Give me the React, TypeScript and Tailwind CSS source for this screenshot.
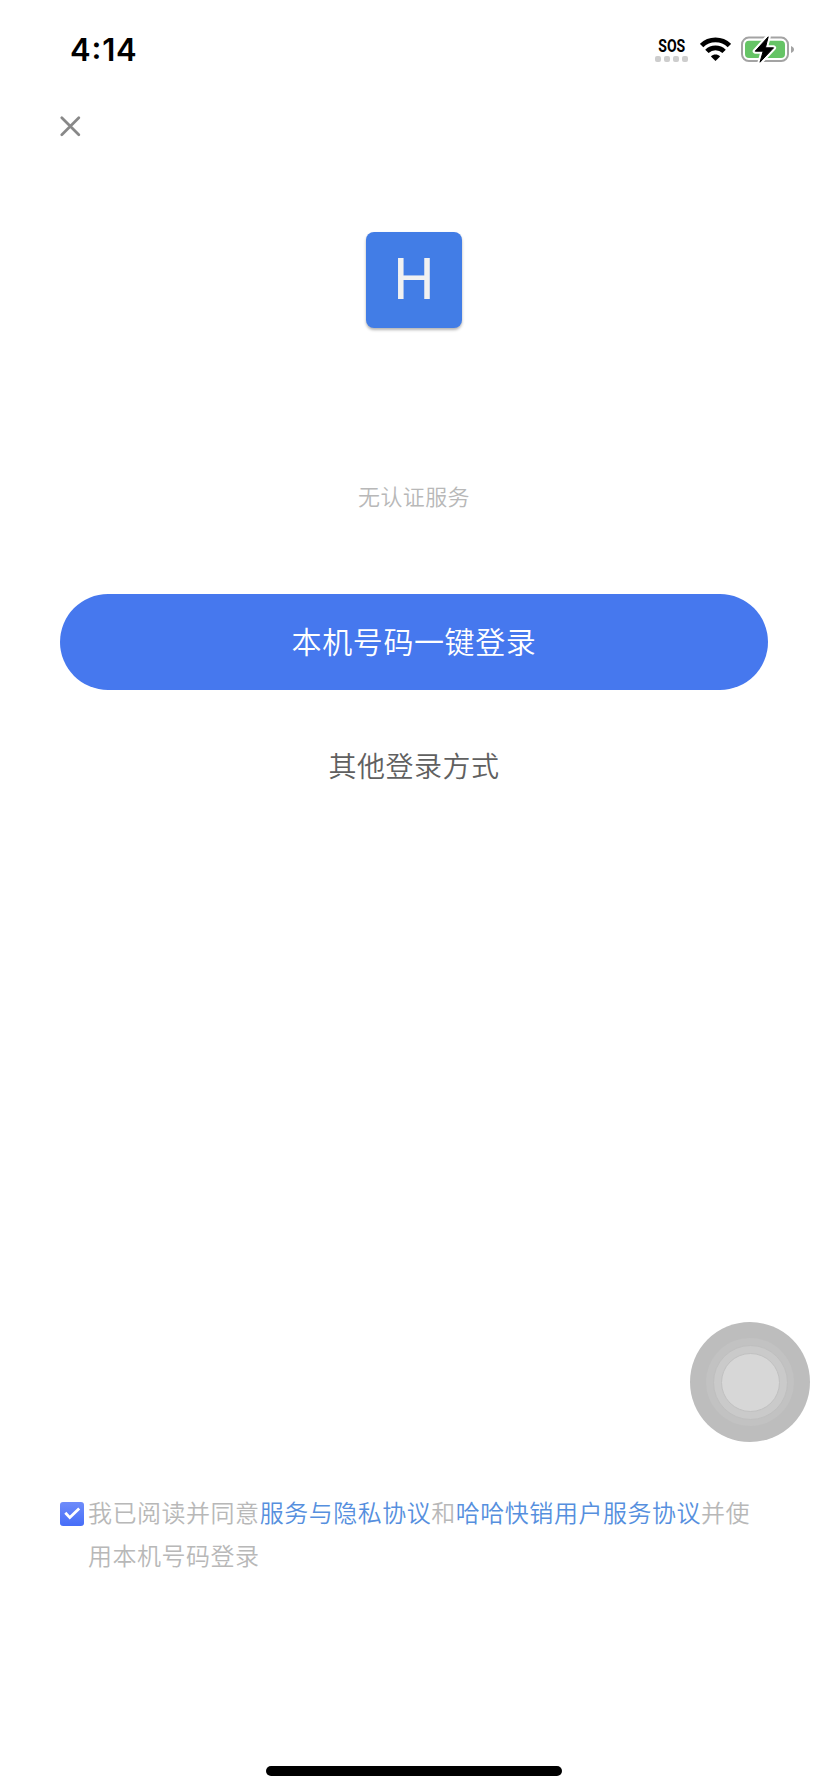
import React from "react";

function StatusBar() {
  return (
    <header className="flex h-[98px] items-start justify-between pl-[70px] pr-[33px]">
      <span className="mt-[31px] font-[Inter,sans-serif] text-[31px] leading-[38px] font-semibold tracking-[0.8px] text-black">
        4<span className="inline-block -translate-y-[2.5px]">:</span>14
      </span>
      <div className="flex">
        <div className="mt-[36px] flex w-[33px] flex-col items-center">
          <span className="flex h-5 scale-x-[0.76] items-center font-[Roboto,sans-serif] text-[18.5px] leading-5 font-bold text-black">
            SOS
          </span>
          <div className="flex gap-[3px]">
            {[0, 1, 2, 3].map((dot) => (
              <i key={dot} className="size-1.5 rounded-[2px] bg-[#cdcdcd]" />
            ))}
          </div>
        </div>
        <svg className="mt-[37px] ml-3 h-6 w-[31px]" viewBox="0 0 31 24" fill="none">
          <path d="M1.6 8.6C9.2 .9 21.8 .9 29.4 8.6" stroke="#000" strokeWidth="4.8" />
          <path d="M6.9 14.4C11.7 9.7 19.3 9.7 24.1 14.4" stroke="#000" strokeWidth="4.8" />
          <path d="M15.5 24L10.9 19.4C13.5 17 17.5 17 20.1 19.4Z" fill="#000" />
        </svg>
        <svg className="mt-[35px] ml-[10px] h-[30px] w-[54px]" viewBox="0 0 54 30" fill="none">
          <rect x="1" y="2.6" width="46" height="23.4" rx="6.8" stroke="#a3a3a3" strokeWidth="2" />
          <rect x="4" y="5.8" width="40" height="17.2" rx="4" fill="#66c466" />
          <path d="M50 11V18C52 17.3 53 16 53 14.5S52 11.7 50 11Z" fill="#a3a3a3" />
          <path
            d="M27.2 1.8L14.2 16.2H22.2L19 27.2L32.6 12.8H24.4Z"
            fill="#fff"
            stroke="#fff"
            strokeWidth="5"
            strokeLinejoin="round"
          />
          <path
            d="M27.2 1.8L14.2 16.2H22.2L19 27.2L32.6 12.8H24.4Z"
            fill="#000"
            stroke="#000"
            strokeWidth="1"
            strokeLinejoin="round"
          />
        </svg>
      </div>
    </header>
  );
}

function AssistiveButton() {
  return (
    <button
      aria-label="AssistiveTouch"
      className="absolute top-[1322px] left-[690px] grid size-[120px] place-items-center rounded-full bg-[#bdbdbd]"
    >
      <span className="grid size-[88px] place-items-center rounded-full bg-[#c2c2c2]">
        <span className="grid size-[75px] place-items-center rounded-full border border-[#bfbfbf] bg-[#cacaca]">
          <span className="size-[59px] rounded-full border border-[#c1c1c1] bg-[#d7d7d7]" />
        </span>
      </span>
    </button>
  );
}

export default function App() {
  return (
    <div className="relative flex h-[1792px] w-[828px] flex-col overflow-hidden bg-white font-['Noto_Sans_CJK_SC',sans-serif] font-[350]">
      <StatusBar />
      <button aria-label="关闭" className="mt-[18px] ml-[60px] size-[21px]">
        <svg viewBox="0 0 21 21" fill="none" stroke="#888" strokeWidth="2.7" strokeLinecap="round">
          <path d="M1.8 1.8L18.8 18.8M18.8 1.8L1.8 18.8" />
        </svg>
      </button>

      <main className="mt-[95px] flex flex-col items-center">
        <div className="flex size-24 justify-center rounded-[8px] bg-[#427de6] pt-[13px] font-[Roboto,sans-serif] text-[58px] leading-[68px] font-normal text-[#f1f1f1] shadow-[0_2px_3px_rgba(0,0,0,0.3)]">
          H
        </div>
        <p className="mt-[151px] text-[22px] leading-8 tracking-[0.4px] text-[#b8b8b8]">
          无认证服务
        </p>
        <button className="mt-[83px] h-24 w-[708px] rounded-full bg-[#4678ee] pb-1 text-[30px] leading-[44px] tracking-[0.6px] text-white">
          本机号码一键登录
        </button>
        <button className="mt-[55px] text-[28px] leading-10 tracking-[0.5px] text-[#606060]">
          其他登录方式
        </button>
      </main>

      <footer className="mt-auto">
        <div className="flex pr-[60px] pl-[60px]">
          <span className="mt-[12px] mr-1 grid size-6 shrink-0 place-items-center rounded-[3px] bg-linear-to-b from-[#6f8cfa] to-[#466df8]">
            <svg className="size-6" viewBox="0 0 24 24" fill="none" stroke="#fff" strokeWidth="2.8">
              <path d="M5.3 10.8L9.8 15.6L19.2 6.6" />
            </svg>
          </span>
          <p className="text-[24px] leading-[43px] tracking-[0.52px] text-[#b8b8b8]">
            我已阅读并同意<a className="text-[#568fde]">服务与隐私协议</a>和
            <a className="text-[#568fde]">哈哈快销用户服务协议</a>并使用本机号码登录
          </p>
        </div>
        <div className="mx-auto mt-[190px] mb-4 h-[10px] w-[296px] rounded-full bg-black" />
      </footer>
      <AssistiveButton />
    </div>
  );
}
